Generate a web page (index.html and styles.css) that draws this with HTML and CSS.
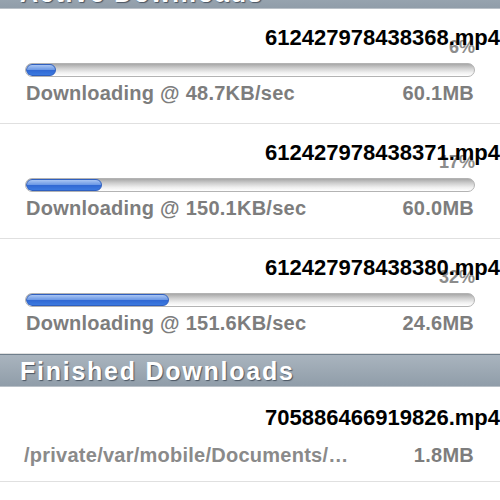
FILE: index.html
```html
<!DOCTYPE html>
<html lang="en">
<head>
    <meta charset="UTF-8">
    <meta name="viewport" content="width=device-width, initial-scale=1.0">
    <title>Downloads</title>
    <link rel="stylesheet" href="styles.css">
</head>
<body>
    <div class="section-header first">Active Downloads</div>

    <div class="download-row">
        <div class="file-name">612427978438368.mp4</div>
        <div class="percent">6%</div>
        <div class="progress"><div class="progress-fill" style="width: 6%;"></div></div>
        <div class="status-line">
            <span>Downloading @ 48.7KB/sec</span>
            <span>60.1MB</span>
        </div>
    </div>

    <div class="download-row">
        <div class="file-name">612427978438371.mp4</div>
        <div class="percent">17%</div>
        <div class="progress"><div class="progress-fill" style="width: 17%;"></div></div>
        <div class="status-line">
            <span>Downloading @ 150.1KB/sec</span>
            <span>60.0MB</span>
        </div>
    </div>

    <div class="download-row">
        <div class="file-name">612427978438380.mp4</div>
        <div class="percent">32%</div>
        <div class="progress"><div class="progress-fill" style="width: 32%;"></div></div>
        <div class="status-line">
            <span>Downloading @ 151.6KB/sec</span>
            <span>24.6MB</span>
        </div>
    </div>

    <div class="section-header">Finished Downloads</div>

    <div class="download-row finished">
        <div class="file-name">705886466919826.mp4</div>
        <div class="status-line path-line">
            <span class="path">/private/var/mobile/Documents/…</span>
            <span>1.8MB</span>
        </div>
    </div>
</body>
</html>
```

FILE: styles.css
```css
body {
    margin: 0;
    background: #fff;
    font-family: "Liberation Sans", Arial, sans-serif;
    font-weight: bold;
    overflow: hidden;
}

/* Grey section bars */
.section-header {
    box-sizing: border-box;
    height: 33px;
    padding: 2px 0 0 20px;
    border-top: 1px solid #6f7e8b;
    border-bottom: 1px solid #b9c0c7;
    background: linear-gradient(#a9b4be, #909da9);
    color: #fff;
    font-size: 25px;
    line-height: 29px;
    letter-spacing: 1.75px;
    text-shadow: 1px 1px 1px #4a5562;
}
.section-header.first {
    margin-top: -24px;
}

/* One download per row */
.download-row {
    padding: 17px 0 19px;
    border-bottom: 1px solid #e0e0e0;
}
.download-row.finished {
    padding: 19px 0 15px;
}

.file-name {
    position: relative;
    z-index: 1;
    text-align: right;
    white-space: nowrap;
    color: #000;
    font-size: 22px;
    line-height: 24px;
}

.percent {
    margin-top: -13px;
    padding-right: 25px;
    text-align: right;
    color: #8c8c8c;
    font-size: 18px;
    line-height: 20px;
}

.progress {
    box-sizing: border-box;
    height: 14px;
    margin: 6px 25px 0;
    border: 1px solid #b3b3b3;
    border-radius: 7px;
    background: linear-gradient(#a8a8a8, #cfcfcf 35%, #efefef 70%, #fff);
    overflow: hidden;
}
.progress-fill {
    box-sizing: border-box;
    height: 100%;
    min-width: 30px;
    border: 1px solid #2f5fbf;
    border-radius: 7px;
    background: linear-gradient(#a9c5f3, #6f9be6 45%, #3169d4 55%, #3c7ae0);
}

.status-line {
    display: flex;
    justify-content: space-between;
    margin-top: 5px;
    padding: 0 26px;
    color: #7d7d7d;
    font-size: 20px;
    line-height: 22px;
    letter-spacing: 0.25px;
}
.path-line {
    margin-top: 14px;
    padding-left: 24px;
}
.path {
    color: #8a8a8a;
}
```
